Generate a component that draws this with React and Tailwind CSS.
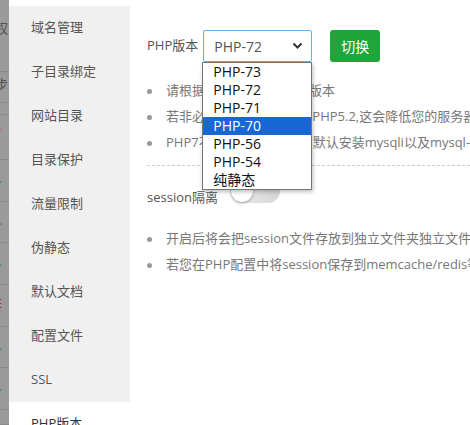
import React from "react";

const FONT = { fontFamily: '"Open Sans","Noto Sans CJK SC",sans-serif' };

const sideItems = ["域名管理", "子目录绑定", "网站目录", "目录保护", "流量限制", "伪静态", "默认文档", "配置文件", "SSL"];
const options = ["PHP-73", "PHP-72", "PHP-71", "PHP-70", "PHP-56", "PHP-54", "纯静态"];

function Bullet({ children }) {
  return (
    <li className="flex items-center h-[26px] whitespace-nowrap">
      <span className="w-[5px] h-[5px] rounded-full bg-[#999] mr-[14px] shrink-0" />
      <span>{children}</span>
    </li>
  );
}

function Strip() {
  const rows = [
    { h: 72, t: "权", c: "text-[#333]", y: "pt-[22px]" },
    { h: 31, t: "步", c: "text-[#333]", y: "pt-[6px]" },
    { h: 12, t: "", c: "", y: "" },
    { h: 45, t: "*", c: "text-[#c0600a]", y: "pt-[10px]" },
    { h: 42, t: "讠", c: "text-[#2a7a2a]", y: "pt-[12px]" },
    { h: 41, t: "讠", c: "text-[#2a7a2a]", y: "pt-[12px]" },
    { h: 42, t: "讠", c: "text-[#2a7a2a]", y: "pt-[12px]" },
    { h: 42, t: "E", c: "text-[#b00000]", y: "pt-[12px]" },
    { h: 41, t: "讠", c: "text-[#2a7a2a]", y: "pt-[12px]" },
    { h: 42, t: "讠", c: "text-[#2a7a2a]", y: "pt-[12px]" },
    { h: 15, t: "", c: "", y: "" },
  ];
  return (
    <div className="w-[9px] shrink-0 bg-[#9a9a9a] overflow-hidden flex flex-col">
      {rows.map((r, i) => (
        <div
          key={i}
          style={{ height: r.h }}
          className={`border-b border-[#8a8a8a] overflow-hidden text-[13px] leading-none ${r.c} ${r.y}`}
        >
          <span className="block ml-[-5px] opacity-70">{r.t}</span>
        </div>
      ))}
    </div>
  );
}

export default function App() {
  return (
    <div className="w-[470px] h-[425px] overflow-hidden bg-white flex relative" style={FONT}>
      <Strip />
      <div className="flex-1 flex flex-col min-w-0">
        <div className="h-[6px] bg-white shrink-0" />
        <div className="flex flex-1 min-h-0">
          <div className="w-[121px] shrink-0 flex flex-col">
            {sideItems.map((s) => (
              <div key={s} className="h-[44px] shrink-0 bg-[#f0f0f0] pl-[22px] flex items-center text-[13px] text-[#555]">
                {s}
              </div>
            ))}
            <div className="h-[44px] shrink-0 bg-white pl-[22px] flex items-center text-[13px] text-[#333]">PHP版本</div>
          </div>
          <div className="flex-1 pl-[17px] pt-[24px] text-[13px] text-[#777] relative min-w-0">
            <div className="flex items-center h-[32px] relative z-10">
              <span className="text-[#555] mr-[5px]">PHP版本</span>
              <div className="relative">
                <div className="w-[109px] h-[32px] border border-[#66afe9] rounded-[2px] flex items-center pl-[10px] pr-[8px] text-[14px] text-[#555] bg-white">
                  <span className="flex-1">PHP-72</span>
                  <svg width="11" height="8" viewBox="0 0 11 8">
                    <path d="M1.5 1.5 L5.5 5.5 L9.5 1.5" fill="none" stroke="#333" strokeWidth="2" />
                  </svg>
                </div>
                <div className="absolute left-[-1px] top-[32px] w-[110px] border border-[#767676] bg-white shadow-[1px_2px_4px_rgba(0,0,0,0.25)] z-10">
                  {options.map((o) => (
                    <div
                      key={o}
                      className={`h-[18px] leading-[18px] pl-[10px] text-[14px] ${o === "PHP-70" ? "bg-[#1967d2] text-white" : "text-[#111]"}`}
                    >
                      {o}
                    </div>
                  ))}
                </div>
              </div>
              <button className="ml-[18px] w-[50px] h-[32px] rounded-[3px] bg-[#20a53a] text-white text-[14px]">切换</button>
            </div>
            <ul className="mt-[16px]">
              <Bullet>请根据您的程序需求选择版本</Bullet>
              <Bullet>若非必要,请尽量不要使用PHP5.2,这会降低您的服务器安全性；</Bullet>
              <Bullet>PHP7不支持mysql扩展，默认安装mysqli以及mysql-pdo。</Bullet>
            </ul>
            <div className="mt-[9px] border-t border-dashed border-[#ccc]" />
            <div className="flex items-center mt-[20px] h-[24px]">
              <span className="text-[#555] whitespace-nowrap">session隔离</span>
              <div className="ml-[12px] self-start mt-[-7px] w-[50px] h-[24px] rounded-full bg-gradient-to-r from-[#eeeeee] to-[#d6d6d6] flex items-center pl-[1px]">
                <div className="w-[22px] h-[22px] rounded-full bg-white shadow-[0_1px_3px_rgba(0,0,0,0.35)]" />
              </div>
            </div>
            <ul className="mt-[16px]">
              <Bullet>开启后将会把session文件存放到独立文件夹独立文件夹中，不与其他站点公用存储位置</Bullet>
              <Bullet>若您在PHP配置中将session保存到memcache/redis等缓存器时，请不要开启此选项</Bullet>
            </ul>
          </div>
        </div>
      </div>
    </div>
  );
}
